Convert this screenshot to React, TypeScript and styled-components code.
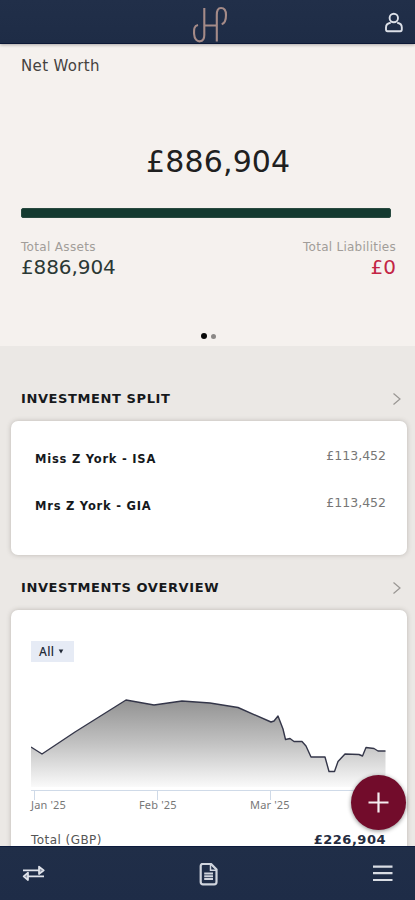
import React from "react";
import styled, { createGlobalStyle } from "styled-components";

const GlobalStyle = createGlobalStyle`
  * { box-sizing: border-box; }
  body { margin: 0; }
`;

const Screen = styled.div`
  position: relative;
  display: flex;
  flex-direction: column;
  width: 415px;
  height: 900px;
  overflow: hidden;
  background: #ebe8e5;
  color: #16191c;
  font-family: "DejaVu Sans", Verdana, sans-serif;
`;

const Header = styled.header`
  display: grid;
  grid-template-columns: 1fr 36px 1fr;
  flex: none;
  height: 44px;
  background: linear-gradient(#212f49, #1e2c46);
  border-bottom: 1px solid #0c1836;
  box-shadow: 0 1px 3px rgba(0, 0, 0, 0.3);
  z-index: 1;
`;

const Logo = styled.svg`
  grid-column: 2;
  margin-top: 6px;
  margin-left: 3.5px;
`;

const ProfileIcon = styled.svg`
  justify-self: end;
  margin: 12px 11px 0 0;
`;

const Main = styled.main`
  flex: 1;
  min-height: 0;
  overflow: hidden;
`;

const NetWorthPanel = styled.section`
  display: flex;
  flex-direction: column;
  height: 302px;
  padding: 12px 19px 0 21px;
  background: #f5f1ee;
`;

type TextProps = {
  $size: number;
  $line: number;
  $color?: string;
  $bold?: boolean;
  $spacing?: number;
};

const Text = styled.span<TextProps>`
  display: block;
  white-space: nowrap;
  font-size: ${(p) => p.$size}px;
  line-height: ${(p) => p.$line}px;
  color: ${(p) => p.$color ?? "inherit"};
  font-weight: ${(p) => (p.$bold ? 700 : 400)};
  letter-spacing: ${(p) => p.$spacing ?? 0}px;
`;

const TotalWorth = styled.div`
  margin: 68px 0 28px 5px;
  padding-left: 120px;
`;

const AssetBar = styled.div`
  flex: none;
  width: 370px;
  height: 10px;
  border-radius: 2px;
  background: #143a30;
  border: 1px solid #28493f;
`;

const Totals = styled.div`
  display: flex;
  justify-content: space-between;
  margin-top: 21px;
`;

const TotalColumn = styled.div<{ $end?: boolean }>`
  display: flex;
  flex-direction: column;
  align-items: ${(p) => (p.$end ? "flex-end" : "flex-start")};
`;

const Dots = styled.div`
  display: flex;
  align-items: center;
  gap: 4px;
  margin: 54px 0 0 180px;
`;

const Dot = styled.i<{ $active?: boolean }>`
  width: ${(p) => (p.$active ? 6 : 5)}px;
  height: ${(p) => (p.$active ? 6 : 5)}px;
  border-radius: 50%;
  background: ${(p) => (p.$active ? "#080808" : "#8b8886")};
`;

const SectionHeader = styled.div<{ $top: number }>`
  display: flex;
  align-items: center;
  justify-content: space-between;
  height: 20px;
  margin: ${(p) => p.$top}px 13px 0 21px;
`;

const Card = styled.section<{ $height: number }>`
  height: ${(p) => p.$height}px;
  margin: 12px 8px 0 11px;
  border-radius: 7px;
  background: #fff;
  box-shadow: 0 0 5px rgba(70, 60, 50, 0.28);
`;

const AccountList = styled.div`
  padding: 26px 21px 0 24px;
`;

const AccountRow = styled.div`
  display: flex;
  justify-content: space-between;
  height: 47px;
`;

const AccountName = styled.div`
  padding-top: 3px;
`;

const OverviewBody = styled.div`
  padding: 31px 21px 0 20px;
`;

const FilterButton = styled.button`
  display: flex;
  align-items: center;
  gap: 4px;
  width: 43px;
  height: 21px;
  padding: 0 0 0 8px;
  border: 0;
  background: #e6ebf5;
  color: #222a38;
  font: 500 12px/20px "Noto Sans", sans-serif;
  letter-spacing: 0.3px;
`;

const Chart = styled.svg`
  display: block;
  margin-top: 28px;
`;

const AxisLabels = styled.div`
  display: grid;
  grid-template-columns: 108px 111px 1fr;
  height: 18px;
  margin-top: -2px;
  color: #777;
  font: 11px/14px "Noto Sans", sans-serif;
  letter-spacing: 0.15px;
`;

const SummaryRow = styled.div`
  display: flex;
  justify-content: space-between;
  margin-top: 15px;
`;

const Footer = styled.footer`
  display: flex;
  justify-content: space-between;
  flex: none;
  height: 54px;
  padding: 16px 22px 0 22px;
  background: linear-gradient(#202e48, #1e2c47);
  border-top: 1px solid #0c1b3d;
  z-index: 1;
`;

const AddButton = styled.button`
  position: absolute;
  left: 351px;
  top: 775px;
  display: flex;
  align-items: center;
  justify-content: center;
  width: 55px;
  height: 55px;
  padding: 0;
  border: 0;
  border-radius: 50%;
  background: #720c2b;
  box-shadow: 0 1px 4px rgba(0, 0, 0, 0.45);
`;

const Chevron = () => (
  <svg width="10" height="14" viewBox="0 0 10 14" fill="none" stroke="#999693" strokeWidth="1.2">
    <path d="M1.5 1.5 8 7 1.5 12.5" />
  </svg>
);

const accounts = [
  { name: "Miss Z York - ISA", value: "£113,452" },
  { name: "Mrs Z York - GIA", value: "£113,452" },
];

const trend =
  "0,57 11,64 44,42 95,10 123,15 151,11 179,13 207,17.5 240,32 243,31 247,26 252,39 254.5,49.5 259,48.5 263,51.5 271,51.5 275,56 280,67 294,67 298,81.5 303.5,81.5 307,71.5 314,64 328,64.5 331.5,66 335,57.5 343,58.5 347,61 354.5,61";

export default function App() {
  return (
    <>
      <GlobalStyle />
      <Screen>
        <Header>
          <Logo width="36" height="37" viewBox="0 0 36 37" fill="none" stroke="#a58b88" strokeWidth="2.1">
            <path d="M5 19C1 20 .9 23 1.1 28 1.4 33 4 35.6 7 35.3 10.3 35 11.3 32.5 11.3 29V2M11.3 19.5H23.8M23.8 35.5V9C23.8 4.5 25 2 28 2c3.6 0 5 2.5 5 7 0 5-1 8.3-4.3 9.3" />
          </Logo>
          <ProfileIcon width="20" height="22" viewBox="0 0 20 22" fill="none" stroke="#dce0e8" strokeWidth="1.9">
            <circle cx="9.8" cy="6" r="4.2" />
            <path d="M6.7 10.8C3.4 11.3 2 13 2 15.5v2.1c0 1 .5 1.6 1.5 1.6h12.8c1 0 1.5-.6 1.5-1.6v-2.1c0-2.5-1.4-4.2-4.6-4.7" />
          </ProfileIcon>
        </Header>

        <Main>
          <NetWorthPanel>
            <Text $size={15} $line={20} $color="#45423f" $spacing={0.35}>Net Worth</Text>
            <TotalWorth>
              <Text $size={30} $line={36} $color="#202020" $spacing={0.15}>£886,904</Text>
            </TotalWorth>
            <AssetBar />
            <Totals>
              <TotalColumn>
                <Text $size={12} $line={16} $color="#a19d99" $spacing={0.33}>Total Assets</Text>
                <Text $size={20} $line={24} $color="#2b3834" $spacing={-0.1}>£886,904</Text>
              </TotalColumn>
              <TotalColumn $end>
                <Text $size={12} $line={16} $color="#a19d99" $spacing={0.26}>Total Liabilities</Text>
                <Text $size={20} $line={24} $color="#c32545">£0</Text>
              </TotalColumn>
            </Totals>
            <Dots>
              <Dot $active />
              <Dot />
            </Dots>
          </NetWorthPanel>

          <SectionHeader $top={43}>
            <Text $size={13} $line={20} $bold $spacing={0.6}>INVESTMENT SPLIT</Text>
            <Chevron />
          </SectionHeader>
          <Card $height={134}>
            <AccountList>
              {accounts.map((account) => (
                <AccountRow key={account.name}>
                  <AccountName>
                    <Text $size={11.5} $line={18} $bold $spacing={0.76}>{account.name}</Text>
                  </AccountName>
                  <Text $size={12.5} $line={18} $color="#777">{account.value}</Text>
                </AccountRow>
              ))}
            </AccountList>
          </Card>

          <SectionHeader $top={23}>
            <Text $size={13} $line={20} $bold $spacing={0.6}>INVESTMENTS OVERVIEW</Text>
            <Chevron />
          </SectionHeader>
          <Card $height={300}>
            <OverviewBody>
              <FilterButton>
                All
                <svg width="6" height="5" viewBox="0 0 6 5" fill="#222a38">
                  <path d="M.7.5h4.6L3 4.5z" />
                </svg>
              </FilterButton>
              <Chart width="355" height="110" viewBox="0 0 355 110">
                <defs>
                  <linearGradient id="area" x1="0" x2="0" y1="0" y2="1">
                    <stop offset="0" stopColor="#929292" />
                    <stop offset="0.5" stopColor="#c2c2c2" />
                    <stop offset="1" stopColor="#fafafa" />
                  </linearGradient>
                </defs>
                <path d={`M${trend.replaceAll(" ", "L")}V97H0Z`} fill="url(#area)" />
                <polyline points={trend} fill="none" stroke="#343649" strokeWidth="1.4" strokeLinejoin="round" />
                <path d="M0 100.5H355M3.5 100v10M126.5 100v10M239.5 100v10" stroke="#cfdae8" fill="none" />
              </Chart>
              <AxisLabels>
                <span>Jan '25</span>
                <span>Feb '25</span>
                <span>Mar '25</span>
              </AxisLabels>
              <SummaryRow>
                <Text $size={12} $line={18} $color="#555" $spacing={0.45}>Total (GBP)</Text>
                <Text $size={13} $line={18} $color="#252c40" $bold $spacing={0.5}>£226,904</Text>
              </SummaryRow>
            </OverviewBody>
          </Card>
        </Main>

        <Footer>
          <svg width="24" height="22" viewBox="0 0 24 22" fill="none" stroke="#e0e3ea" strokeWidth="1.7">
            <path d="M1 7.3h16M22 13.3H6" />
            <path d="M17 3.6 21.8 7.3l-4.8 3.7zM6 9.6 1.6 13.3 6 17z" fill="#8e96a6" strokeLinejoin="round" />
          </svg>
          <svg width="22" height="24" viewBox="0 0 22 24" fill="none" stroke="#d0d5de" strokeWidth="2.2">
            <path d="M4 .9h8l5.5 5.6V19c0 1.6-.7 2.3-2.3 2.3H4C2.5 21.3 1.7 20.6 1.7 19V3.2C1.7 1.6 2.5.9 4 .9z" />
            <path d="M11.5 1.5v5.8h5.5" strokeWidth="1.5" />
            <path d="M5.2 10.5H14M5.2 13.2H14M5.2 16H14" strokeWidth="2" />
          </svg>
          <svg width="20" height="22" viewBox="0 0 20 22" fill="none" stroke="#d9dde4" strokeWidth="2.2">
            <path d="M0 3.7h19.5M0 10.2h19.5M0 17h19.5" />
          </svg>
        </Footer>

        <AddButton aria-label="Add">
          <svg width="21" height="21" viewBox="0 0 21 21" stroke="#f5edf0" strokeWidth="2.2">
            <path d="M10.5.5v20M.5 10.5h20" />
          </svg>
        </AddButton>
      </Screen>
    </>
  );
}
